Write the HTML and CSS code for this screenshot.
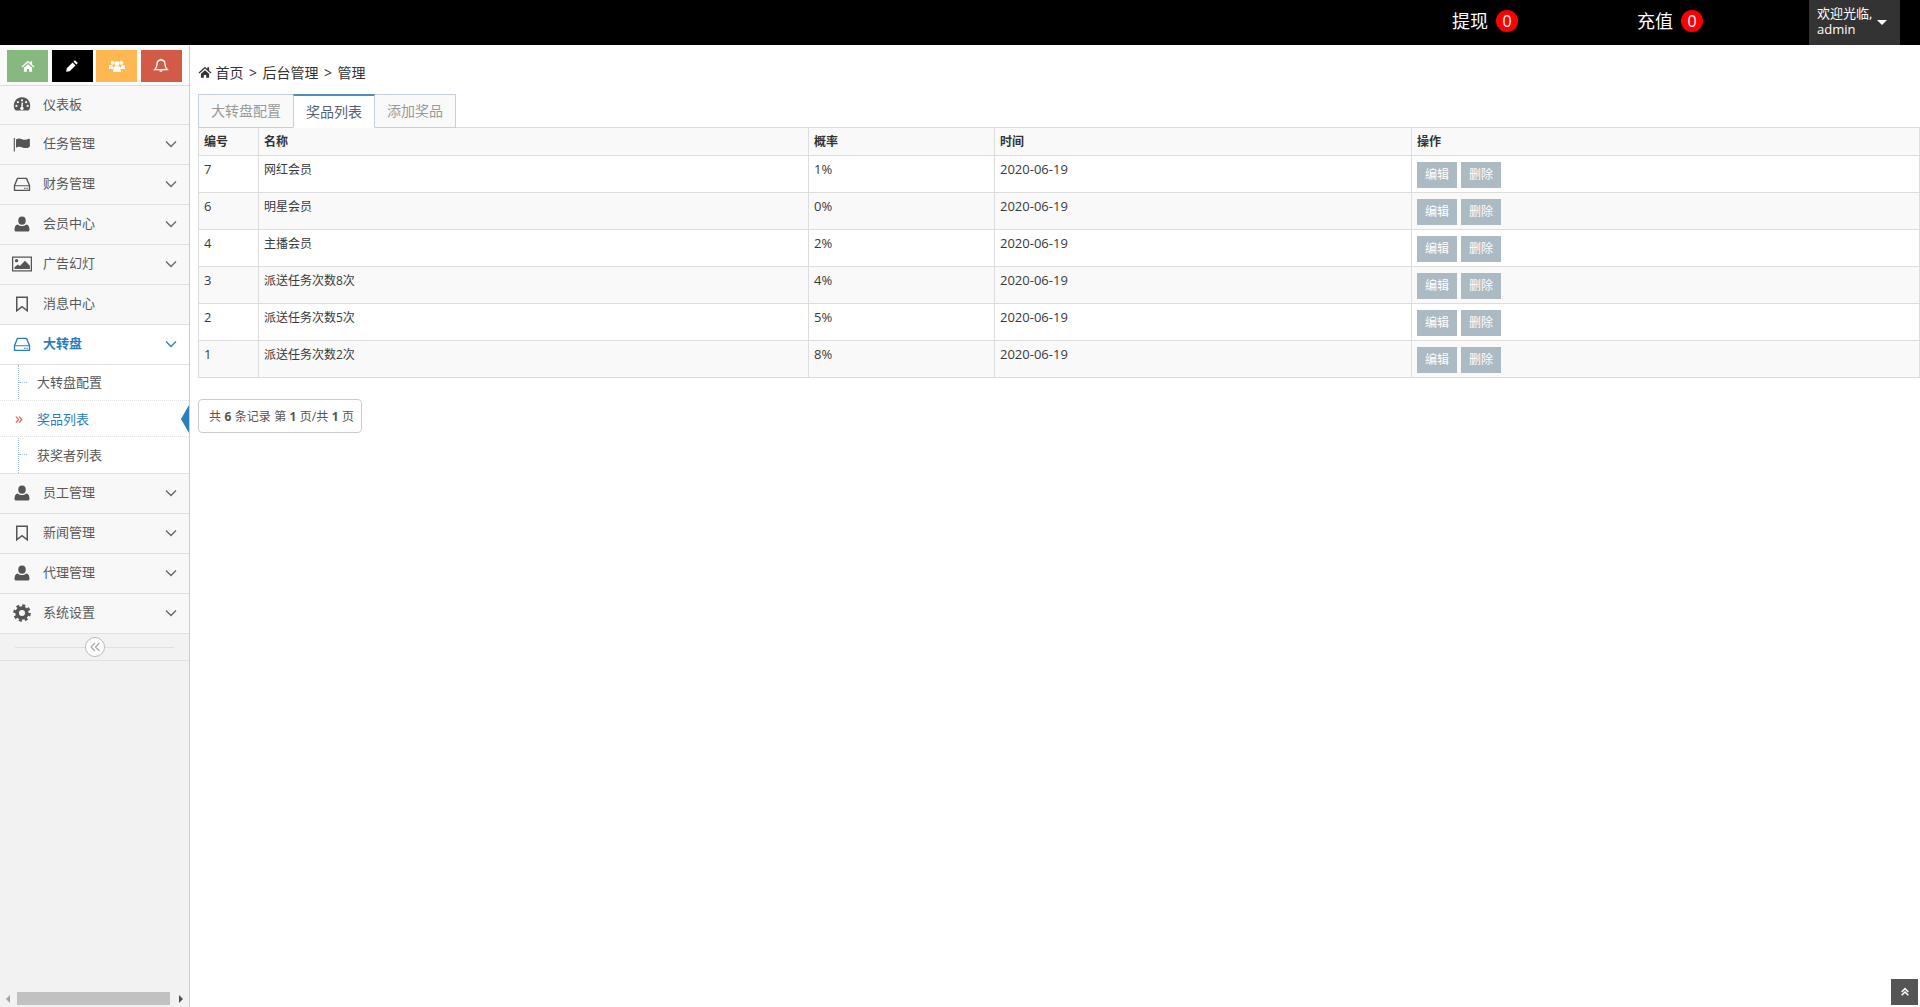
FILE: index.html
```html
<!DOCTYPE html>
<html lang="zh-CN">
<head>
    <meta charset="UTF-8">
    <title>大转盘 - 奖品列表</title>
    <link rel="stylesheet" href="styles.css">
</head>
<body>
    <svg class="sprite" xmlns="http://www.w3.org/2000/svg">
        <symbol id="i-home" viewBox="0 0 24 24"><path d="M12 3 1 13l1.400 1.500L12 6l9.600 8.500L23 13l-4-3.600V4h-3v2.700zM5 15v7h5v-5h4v5h5v-7l-7-6.200z"/></symbol>
        <symbol id="i-pencil" viewBox="0 0 24 24"><path d="M17 2l5 5-2.500 2.500-5-5zM13 6l5 5L8 21l-6 1 1-6z"/></symbol>
        <symbol id="i-group" viewBox="0 0 24 24"><circle cx="5.500" cy="7" r="3"/><circle cx="18.500" cy="7" r="3"/><circle cx="12" cy="8.500" r="3.600"/><path d="M0 17v-4c0-2 1.500-2.500 3-2.500l2 .5 1.500 5.500H1zM24 17v-4c0-2-1.500-2.500-3-2.500l-2 .5-1.500 5.500H23zM6.500 21v-5c0-3 2-3.500 3-3.500h5c1 0 3 .5 3 3.500v5z"/></symbol>
        <symbol id="i-bell" viewBox="0 0 24 24"><path d="M12 3c-4 0-6 3-6 6.500 0 4-1.500 6-3.500 8h19c-2-2-3.500-4-3.500-8C18 6 16 3 12 3z" fill="none" stroke="currentColor" stroke-width="2"/><path d="M9.500 18.500h5a2.500 2.500 0 0 1-5 0zM11 1h2v2h-2z"/></symbol>
        <symbol id="i-dashboard" viewBox="0 0 24 24"><path fill-rule="evenodd" d="M12 3a11 11 0 0 0-9.500 16.500c.4.700 1 1 1.700 1h15.600c.7 0 1.300-.3 1.700-1A11 11 0 0 0 12 3zM12 5.500a1.500 1.500 0 1 1 0 3 1.500 1.500 0 0 1 0-3zM6.500 8a1.500 1.500 0 1 1 0 3 1.500 1.500 0 0 1 0-3zM17.500 8a1.500 1.500 0 1 1 0 3 1.500 1.500 0 0 1 0-3zM4.500 13a1.500 1.500 0 1 1 0 3 1.500 1.500 0 0 1 0-3zM19.500 13a1.500 1.500 0 1 1 0 3 1.500 1.500 0 0 1 0-3zM13.500 10l-.6 6a2.200 2.200 0 1 1-2 0l.6-6z"/></symbol>
        <symbol id="i-flag" viewBox="0 0 24 24"><path d="M1 4h1.500v18H1zM4 6c3-2 5-1.500 8-.5s6 1 9-.5c.8-.3 1.500 0 1.500.8v9c0 .7-.3 1-1 1.400-3 1.600-6 1.300-9 .3s-5-1.500-8.500.5z"/></symbol>
        <symbol id="i-hdd" viewBox="0 0 24 24"><path d="M6 4.500h12l4 9.500v6.500H2V14z" fill="none" stroke="currentColor" stroke-width="1.800" stroke-linejoin="round"/><path d="M2.500 13.500h19v1.600h-19zM15 17h1.600v1.500H15zM18 17h1.600v1.500H18z"/></symbol>
        <symbol id="i-user" viewBox="0 0 24 24"><ellipse cx="12" cy="7.500" rx="5" ry="5.500"/><path d="M4 22c-1.200 0-2-.8-2-2 0-4 1-7 4.500-7.500C8 14 10 14.500 12 14.500s4-.5 5.500-2c3.500.5 4.500 3.500 4.500 7.500 0 1.200-.8 2-2 2z"/></symbol>
        <symbol id="i-picture" viewBox="0 0 24 24"><path fill-rule="evenodd" d="M0 3h24v18H0zM1.500 4.500v15h21v-15z"/><circle cx="5.500" cy="8" r="2"/><path d="M3 18v-2l4-3.500 2.500 2L15.500 8l6 6v4z"/></symbol>
        <symbol id="i-bookmark" viewBox="0 0 24 24"><path d="M5 3h14v18l-7-5.500L5 21z" fill="none" stroke="currentColor" stroke-width="2"/></symbol>
        <symbol id="i-cog" viewBox="0 0 24 24"><circle cx="12" cy="12" r="6.500" fill="none" stroke="currentColor" stroke-width="5"/><circle cx="12" cy="12" r="10" fill="none" stroke="currentColor" stroke-width="3.500" stroke-dasharray="4 3.850"/></symbol>
        <symbol id="i-down" viewBox="0 0 12 8"><path d="M1 1.500 6 6.500l5-5" fill="none" stroke="currentColor" stroke-width="1.300"/></symbol>
        <symbol id="i-dleft" viewBox="0 0 12 12"><path d="M6 2 2 6l4 4M10.500 2l-4 4 4 4" fill="none" stroke="currentColor" stroke-width="1.300"/></symbol>
        <symbol id="i-dup" viewBox="0 0 12 12"><path d="M2 6l4-4 4 4M2 10l4-4 4 4" fill="none" stroke="currentColor" stroke-width="1.800"/></symbol>
    </svg>

    <header class="navbar">
        <a class="nav-link" href="#">提现<span class="badge">0</span></a>
        <a class="nav-link" href="#">充值<span class="badge">0</span></a>
        <div class="user-menu">
            <span class="user-info">欢迎光临,<br>admin</span>
            <span class="caret"></span>
        </div>
    </header>

    <div class="layout">
        <aside class="sidebar">
            <div class="shortcuts">
                <button class="shortcut green"><svg class="icon-sm"><use href="#i-home"/></svg></button>
                <button class="shortcut black"><svg class="icon-sm"><use href="#i-pencil"/></svg></button>
                <button class="shortcut orange"><svg class="icon-md"><use href="#i-group"/></svg></button>
                <button class="shortcut red"><svg class="icon-md"><use href="#i-bell"/></svg></button>
            </div>
            <ul class="menu">
                <li class="menu-item"><svg class="menu-icon"><use href="#i-dashboard"/></svg><span class="menu-text">仪表板</span></li>
                <li class="menu-item"><svg class="menu-icon"><use href="#i-flag"/></svg><span class="menu-text">任务管理</span><svg class="arrow"><use href="#i-down"/></svg></li>
                <li class="menu-item"><svg class="menu-icon"><use href="#i-hdd"/></svg><span class="menu-text">财务管理</span><svg class="arrow"><use href="#i-down"/></svg></li>
                <li class="menu-item"><svg class="menu-icon"><use href="#i-user"/></svg><span class="menu-text">会员中心</span><svg class="arrow"><use href="#i-down"/></svg></li>
                <li class="menu-item"><svg class="menu-icon wide"><use href="#i-picture"/></svg><span class="menu-text">广告幻灯</span><svg class="arrow"><use href="#i-down"/></svg></li>
                <li class="menu-item"><svg class="menu-icon"><use href="#i-bookmark"/></svg><span class="menu-text">消息中心</span></li>
                <li class="menu-item open"><svg class="menu-icon"><use href="#i-hdd"/></svg><span class="menu-text">大转盘</span><svg class="arrow"><use href="#i-down"/></svg></li>
                <li>
                    <ul class="submenu">
                        <li class="sub-item">大转盘配置</li>
                        <li class="sub-item active">奖品列表</li>
                        <li class="sub-item">获奖者列表</li>
                    </ul>
                </li>
                <li class="menu-item"><svg class="menu-icon"><use href="#i-user"/></svg><span class="menu-text">员工管理</span><svg class="arrow"><use href="#i-down"/></svg></li>
                <li class="menu-item"><svg class="menu-icon"><use href="#i-bookmark"/></svg><span class="menu-text">新闻管理</span><svg class="arrow"><use href="#i-down"/></svg></li>
                <li class="menu-item"><svg class="menu-icon"><use href="#i-user"/></svg><span class="menu-text">代理管理</span><svg class="arrow"><use href="#i-down"/></svg></li>
                <li class="menu-item"><svg class="menu-icon"><use href="#i-cog"/></svg><span class="menu-text">系统设置</span><svg class="arrow"><use href="#i-down"/></svg></li>
            </ul>
            <div class="collapse">
                <span class="collapse-btn"><svg class="collapse-icon"><use href="#i-dleft"/></svg></span>
            </div>
            <div class="side-scroll">
                <span class="scroll-left"></span>
                <span class="scroll-thumb"></span>
                <span class="scroll-right"></span>
            </div>
        </aside>

        <main class="content">
            <div class="breadcrumb">
                <svg class="crumb-icon"><use href="#i-home"/></svg>
                <span>首页</span><span>&gt;</span><span>后台管理</span><span>&gt;</span><span>管理</span>
            </div>
            <ul class="tabs">
                <li class="tab">大转盘配置</li>
                <li class="tab active">奖品列表</li>
                <li class="tab">添加奖品</li>
            </ul>
            <table class="data-table">
                <colgroup>
                    <col class="col-id"><col class="col-name"><col class="col-rate"><col class="col-time"><col>
                </colgroup>
                <thead>
                    <tr><th>编号</th><th>名称</th><th>概率</th><th>时间</th><th>操作</th></tr>
                </thead>
                <tbody>
                    <tr><td class="num">7</td><td>网红会员</td><td class="num">1%</td><td class="num">2020-06-19</td><td><a class="btn">编辑</a><a class="btn">删除</a></td></tr>
                    <tr><td class="num">6</td><td>明星会员</td><td class="num">0%</td><td class="num">2020-06-19</td><td><a class="btn">编辑</a><a class="btn">删除</a></td></tr>
                    <tr><td class="num">4</td><td>主播会员</td><td class="num">2%</td><td class="num">2020-06-19</td><td><a class="btn">编辑</a><a class="btn">删除</a></td></tr>
                    <tr><td class="num">3</td><td>派送任务次数8次</td><td class="num">4%</td><td class="num">2020-06-19</td><td><a class="btn">编辑</a><a class="btn">删除</a></td></tr>
                    <tr><td class="num">2</td><td>派送任务次数5次</td><td class="num">5%</td><td class="num">2020-06-19</td><td><a class="btn">编辑</a><a class="btn">删除</a></td></tr>
                    <tr><td class="num">1</td><td>派送任务次数2次</td><td class="num">8%</td><td class="num">2020-06-19</td><td><a class="btn">编辑</a><a class="btn">删除</a></td></tr>
                </tbody>
            </table>
            <div class="pager">共 <b>6</b> 条记录 第 <b>1</b> 页/共 <b>1</b> 页</div>
        </main>
    </div>

    <a class="back-top" href="#"><svg class="back-icon"><use href="#i-dup"/></svg></a>
</body>
</html>
```

FILE: styles.css
```css
/* General Styles */
* { box-sizing: border-box; }

html, body {
    height: 100%;
    margin: 0;
    overflow: hidden;
}

body {
    display: flex;
    flex-direction: column;
    background: #fff;
    color: #393939;
    font-family: "Open Sans", "Noto Sans CJK SC", sans-serif;
    font-size: 12px;
    line-height: 17px;
}

ul { list-style: none; margin: 0; padding: 0; }
.sprite { width: 0; height: 0; display: block; }
svg { fill: currentColor; }

/* Top bar */
.navbar {
    height: 45px;
    flex: none;
    display: flex;
    justify-content: flex-end;
    background: #000;
    color: #fff;
    padding-right: 20px;
}

.nav-link {
    display: flex;
    align-items: center;
    padding-bottom: 3px;
    color: #fff;
    text-decoration: none;
    font-size: 18px;
    margin-right: 119px;
}

.nav-link:nth-child(2) { margin-right: 106px; }

.badge {
    width: 22px;
    height: 22px;
    margin-left: 8px;
    border-radius: 50%;
    background: #f00;
    font-size: 16px;
    line-height: 22px;
    text-align: center;
}

.user-menu {
    width: 91px;
    display: flex;
    align-items: center;
    padding-left: 8px;
    background: #333;
}

.user-info { font-size: 13px; line-height: 16px; width: 60px; white-space: nowrap; padding-bottom: 3px; }

.caret {
    border-top: 5px solid #fff;
    border-left: 5px solid transparent;
    border-right: 5px solid transparent;
}

.layout { flex: 1; display: flex; min-height: 0; }

/* Sidebar */
.sidebar {
    width: 190px;
    flex: none;
    display: flex;
    flex-direction: column;
    background: #f2f2f2;
    border-right: 1px solid #ccc;
    font-size: 13px;
    color: #585858;
}

.shortcuts {
    height: 41px;
    display: flex;
    justify-content: space-between;
    padding: 5px 7px 0;
    background: #fafafa;
    border-bottom: 1px solid #ddd;
}

.shortcut {
    width: 41px;
    height: 32px;
    padding: 0;
    border: 0;
    color: #fff;
    display: flex;
    align-items: center;
    justify-content: center;
}

.green { background: #87b87f; }
.black { background: #000; }
.orange { background: #ffb752; }
.red { background: #d15b47; }

.icon-sm { width: 14px; height: 14px; }
.icon-md { width: 16px; height: 16px; }

.menu-item {
    height: 40px;
    display: flex;
    align-items: center;
    padding: 0 0 2px 13px;
    background: #f8f8f8;
    border-bottom: 1px solid #e0e0e0;
}

.menu-item:first-child { height: 39px; }
.menu-item.open { background: #fff; color: #2b7dbc; font-weight: 700; }

.menu-icon { width: 18px; height: 18px; flex: none; color: #555; }
.menu-icon.wide { width: 20px; height: 20px; margin: 0 -1px; }
.open .menu-icon { color: #2b7dbc; }
.menu-text { margin-left: 12px; flex: 1; }

.arrow { width: 12px; height: 8px; margin-right: 12px; flex: none; color: #666; }
.open .arrow { color: #2b7dbc; }

.submenu {
    background: #fff;
    position: relative;
    border-bottom: 1px solid #e0e0e0;
}

.submenu::before {
    content: "";
    position: absolute;
    left: 18px;
    top: 0;
    bottom: 0;
    border-left: 1px dotted #9dbdd6;
}

.sub-item {
    height: 36px;
    line-height: 36px;
    padding-left: 37px;
    position: relative;
    border-bottom: 1px dotted #e4e4e4;
}

.sub-item:first-child { line-height: 35px; }
.sub-item:last-child { border-bottom: 0; }

.sub-item::before {
    content: "";
    position: absolute;
    left: 19px;
    top: 17px;
    width: 8px;
    border-top: 1px dotted #9dbdd6;
}

.sub-item.active { color: #2b7dbc; }

.sub-item.active::before {
    content: "»";
    left: 15px;
    top: 0;
    border: 0;
    color: #d15b47;
    font-size: 16px;
    line-height: 35px;
    background: #fff;
}

.sub-item.active::after {
    content: "";
    position: absolute;
    right: 0;
    top: 4px;
    border-top: 14px solid transparent;
    border-bottom: 14px solid transparent;
    border-right: 8px solid #2b7dbc;
}

.collapse {
    height: 27px;
    flex: none;
    display: flex;
    align-items: center;
    justify-content: center;
    position: relative;
    border-bottom: 1px solid #e0e0e0;
}

.collapse::before {
    content: "";
    position: absolute;
    left: 15px;
    right: 15px;
    top: 13px;
    border-top: 1px solid #e0e0e0;
}

.collapse-btn {
    width: 20px;
    height: 20px;
    position: relative;
    display: flex;
    align-items: center;
    justify-content: center;
    background: #fff;
    border: 1px solid #bbb;
    border-radius: 50%;
    color: #aaa;
}

.collapse-icon { width: 12px; height: 12px; }

.side-scroll {
    height: 13px;
    flex: none;
    margin-top: auto;
    margin-bottom: 2px;
    display: flex;
    align-items: center;
    padding-left: 6px;
}

.scroll-left {
    border-top: 4px solid transparent;
    border-bottom: 4px solid transparent;
    border-right: 4px solid #a3a3a3;
}

.scroll-thumb { width: 153px; height: 13px; margin: 0 9px 0 7px; background: #c1c1c1; }

.scroll-right {
    border-top: 4px solid transparent;
    border-bottom: 4px solid transparent;
    border-left: 4px solid #505050;
}

/* Content */
.content { flex: 1; min-width: 0; padding: 18px 0 0 8px; }

.breadcrumb {
    height: 18px;
    display: flex;
    align-items: center;
    gap: 5.5px;
    margin-bottom: 13px;
    font-size: 14px;
    color: #333;
}

.crumb-icon { width: 14px; height: 14px; margin-right: -2px; }

.tabs { display: flex; height: 33px; position: relative; }

.tab {
    height: 34px;
    padding: 7px 12px 0;
    background: #f9f9f9;
    border: 1px solid #c5d0dc;
    margin-right: -1px;
    font-size: 14px;
    color: #999;
    position: relative;
}

.tab.active {
    background: #fff;
    color: #576373;
    border-top: 2px solid #4c8fbd;
    border-bottom-color: #fff;
    z-index: 1;
}

.data-table {
    width: 100%;
    table-layout: fixed;
    border-collapse: collapse;
    border-top: 1px solid #c5d0dc;
}

.col-id { width: 60px; }
.col-name { width: 550px; }
.col-rate { width: 186px; }
.col-time { width: 417px; }

.data-table th,
.data-table td {
    padding: 5px;
    border: 1px solid #ddd;
    text-align: left;
    vertical-align: top;
}

.data-table th { height: 27px; background: #f9f9f9; color: #333; }
.data-table td { height: 37px; padding-bottom: 4px; color: #393939; }
.data-table td.num { font-size: 13px; }
.data-table tbody tr:nth-child(even) td { background: #f9f9f9; }

.btn {
    display: inline-block;
    vertical-align: top;
    width: 40px;
    height: 26px;
    margin: 1px 4px 0 0;
    background: #abbac3;
    color: #fff;
    line-height: 26px;
    text-align: center;
}

.pager {
    display: inline-block;
    height: 34px;
    margin-top: 21px;
    padding: 8px 7px 8px 10px;
    border: 1px solid #ccc;
    border-radius: 4px;
    color: #555;
    word-spacing: 0.3px;
}

.back-top {
    position: fixed;
    right: 2px;
    bottom: 2px;
    width: 27px;
    height: 26px;
    display: flex;
    align-items: center;
    justify-content: center;
    background: #555;
    color: #fff;
}

.back-icon { width: 10px; height: 10px; }
```
